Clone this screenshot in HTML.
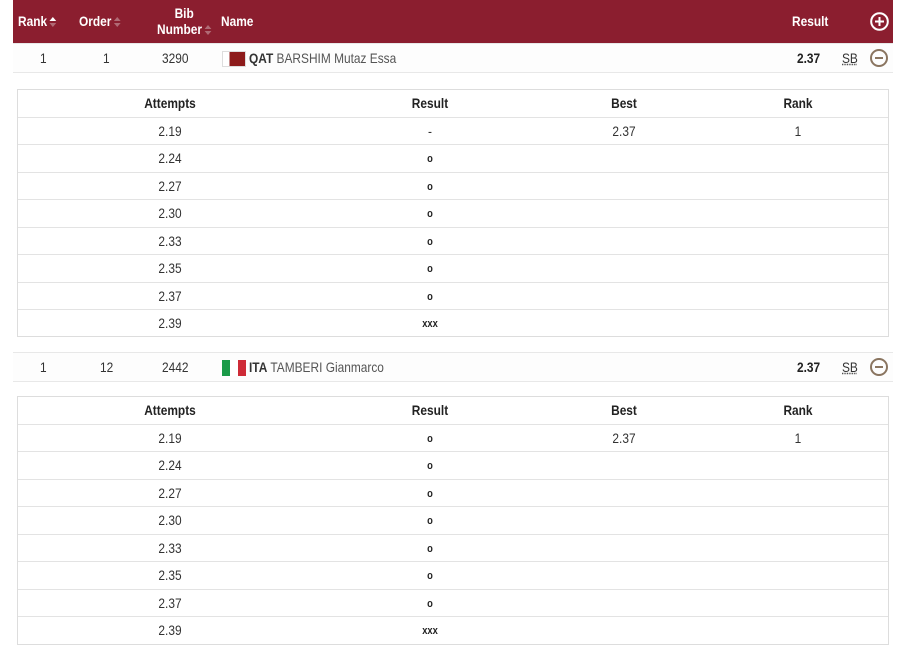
<!DOCTYPE html>
<html><head><meta charset="utf-8"><style>
*{margin:0;padding:0;box-sizing:border-box}
body{width:900px;height:651px;background:#fff;font-family:"Liberation Sans Narrow","Liberation Sans",sans-serif;color:#333;font-size:14px;position:relative;overflow:hidden}
.a{position:absolute;white-space:nowrap}
.t{transform:scaleX(0.85);transform-origin:0 50%}
.hdr{position:absolute;left:13px;top:0;width:880px;height:43px;background:#8b1e2f;color:#fff;font-weight:bold;font-size:14px}
.arr{display:inline-block;width:8px;vertical-align:middle;margin-left:3px}
.row{position:absolute;left:13px;width:880px;height:30px;border-top:1px solid #e8e8e8;border-bottom:1px solid #e8e8e8;background:#fdfdfd}
.sub{position:absolute;left:17px;width:872px;border:1px solid #ddd}
.sub div.r{height:27.5px;border-bottom:1px solid #e3e3e3;position:relative}
.sub div.r:last-child{border-bottom:none}
.c{position:absolute;top:5px;transform:translateX(-50%) scaleX(0.85);white-space:nowrap}
.b{font-weight:bold;color:#222}
.o{font-size:11px;top:8px;font-weight:bold;color:#222}
.min{position:absolute;width:18px;height:18px;border:2px solid #8a7560;border-radius:50%}
.min:after{content:"";position:absolute;left:3px;top:6px;width:8px;height:2px;background:#8a7560}
</style></head><body>
<div class="hdr">
<div class="a t" style="left:5px;top:13px">Rank<svg class="arr" viewBox="0 0 8 12" height="12"><path d="M0 5L4 1L8 5Z" fill="#fff"/><path d="M0 7L4 11L8 7Z" fill="#b06a75"/></svg></div>
<div class="a t" style="left:66px;top:13px">Order<svg class="arr" viewBox="0 0 8 12" height="12"><path d="M0 5L4 1L8 5Z" fill="#b06a75"/><path d="M0 7L4 11L8 7Z" fill="#b06a75"/></svg></div>
<div class="a t" style="left:144px;top:5px;text-align:center;line-height:16px">Bib<br>Number<svg class="arr" viewBox="0 0 8 12" height="12"><path d="M0 5L4 1L8 5Z" fill="#b06a75"/><path d="M0 7L4 11L8 7Z" fill="#b06a75"/></svg></div>
<div class="a t" style="left:208px;top:13px">Name</div>
<div class="a t" style="left:779px;top:13px">Result</div>
<svg class="a" style="left:857px;top:12px" width="19" height="19" viewBox="0 0 19 19"><circle cx="9.5" cy="9.5" r="8.3" fill="none" stroke="#fff" stroke-width="2"/><path d="M5 9.5H14M9.5 5V14" stroke="#fff" stroke-width="2"/></svg>
</div>

<div class="row" style="top:43px">
<div class="a t" style="left:27px;top:6px">1</div>
<div class="a t" style="left:90px;top:6px">1</div>
<div class="a t" style="left:149px;top:6px">3290</div>
<div class="a" style="left:209px;top:7px;width:24px;height:16px;border:1px solid #ddd;background:linear-gradient(90deg,#fff 30%,#8d1b1b 30%)"></div>
<div class="a t" style="left:236px;top:6px;color:#555"><b style="color:#333">QAT</b> BARSHIM Mutaz Essa</div>
<div class="a b t" style="left:784px;top:6px">2.37</div>
<div class="a t" style="left:829px;top:6px;text-decoration:underline dotted">SB</div>
<div class="min" style="left:857px;top:5px"></div>
</div>

<div class="sub" style="top:89px;height:248px">
<div class="r"><span class="c b" style="left:152px">Attempts</span><span class="c b" style="left:412px">Result</span><span class="c b" style="left:606px">Best</span><span class="c b" style="left:780px">Rank</span></div>
<div class="r"><span class="c" style="left:152px">2.19</span><span class="c" style="left:412px">-</span><span class="c" style="left:606px">2.37</span><span class="c" style="left:780px">1</span></div>
<div class="r"><span class="c" style="left:152px">2.24</span><span class="c o" style="left:412px">o</span></div>
<div class="r"><span class="c" style="left:152px">2.27</span><span class="c o" style="left:412px">o</span></div>
<div class="r"><span class="c" style="left:152px">2.30</span><span class="c o" style="left:412px">o</span></div>
<div class="r"><span class="c" style="left:152px">2.33</span><span class="c o" style="left:412px">o</span></div>
<div class="r"><span class="c" style="left:152px">2.35</span><span class="c o" style="left:412px">o</span></div>
<div class="r"><span class="c" style="left:152px">2.37</span><span class="c o" style="left:412px">o</span></div>
<div class="r"><span class="c" style="left:152px">2.39</span><span class="c o" style="left:412px">xxx</span></div>
</div>

<div class="row" style="top:352px">
<div class="a t" style="left:27px;top:6px">1</div>
<div class="a t" style="left:87px;top:6px">12</div>
<div class="a t" style="left:149px;top:6px">2442</div>
<div class="a" style="left:209px;top:7px;width:24px;height:16px;background:linear-gradient(90deg,#1a9a48 33%,#fff 33%,#fff 66%,#ce2b37 66%)"></div>
<div class="a t" style="left:236px;top:6px;color:#555"><b style="color:#333">ITA</b> TAMBERI Gianmarco</div>
<div class="a b t" style="left:784px;top:6px">2.37</div>
<div class="a t" style="left:829px;top:6px;text-decoration:underline dotted">SB</div>
<div class="min" style="left:857px;top:5px"></div>
</div>

<div class="sub" style="top:396px;height:249px">
<div class="r"><span class="c b" style="left:152px">Attempts</span><span class="c b" style="left:412px">Result</span><span class="c b" style="left:606px">Best</span><span class="c b" style="left:780px">Rank</span></div>
<div class="r"><span class="c" style="left:152px">2.19</span><span class="c o" style="left:412px">o</span><span class="c" style="left:606px">2.37</span><span class="c" style="left:780px">1</span></div>
<div class="r"><span class="c" style="left:152px">2.24</span><span class="c o" style="left:412px">o</span></div>
<div class="r"><span class="c" style="left:152px">2.27</span><span class="c o" style="left:412px">o</span></div>
<div class="r"><span class="c" style="left:152px">2.30</span><span class="c o" style="left:412px">o</span></div>
<div class="r"><span class="c" style="left:152px">2.33</span><span class="c o" style="left:412px">o</span></div>
<div class="r"><span class="c" style="left:152px">2.35</span><span class="c o" style="left:412px">o</span></div>
<div class="r"><span class="c" style="left:152px">2.37</span><span class="c o" style="left:412px">o</span></div>
<div class="r"><span class="c" style="left:152px">2.39</span><span class="c o" style="left:412px">xxx</span></div>
</div>
</body></html>
